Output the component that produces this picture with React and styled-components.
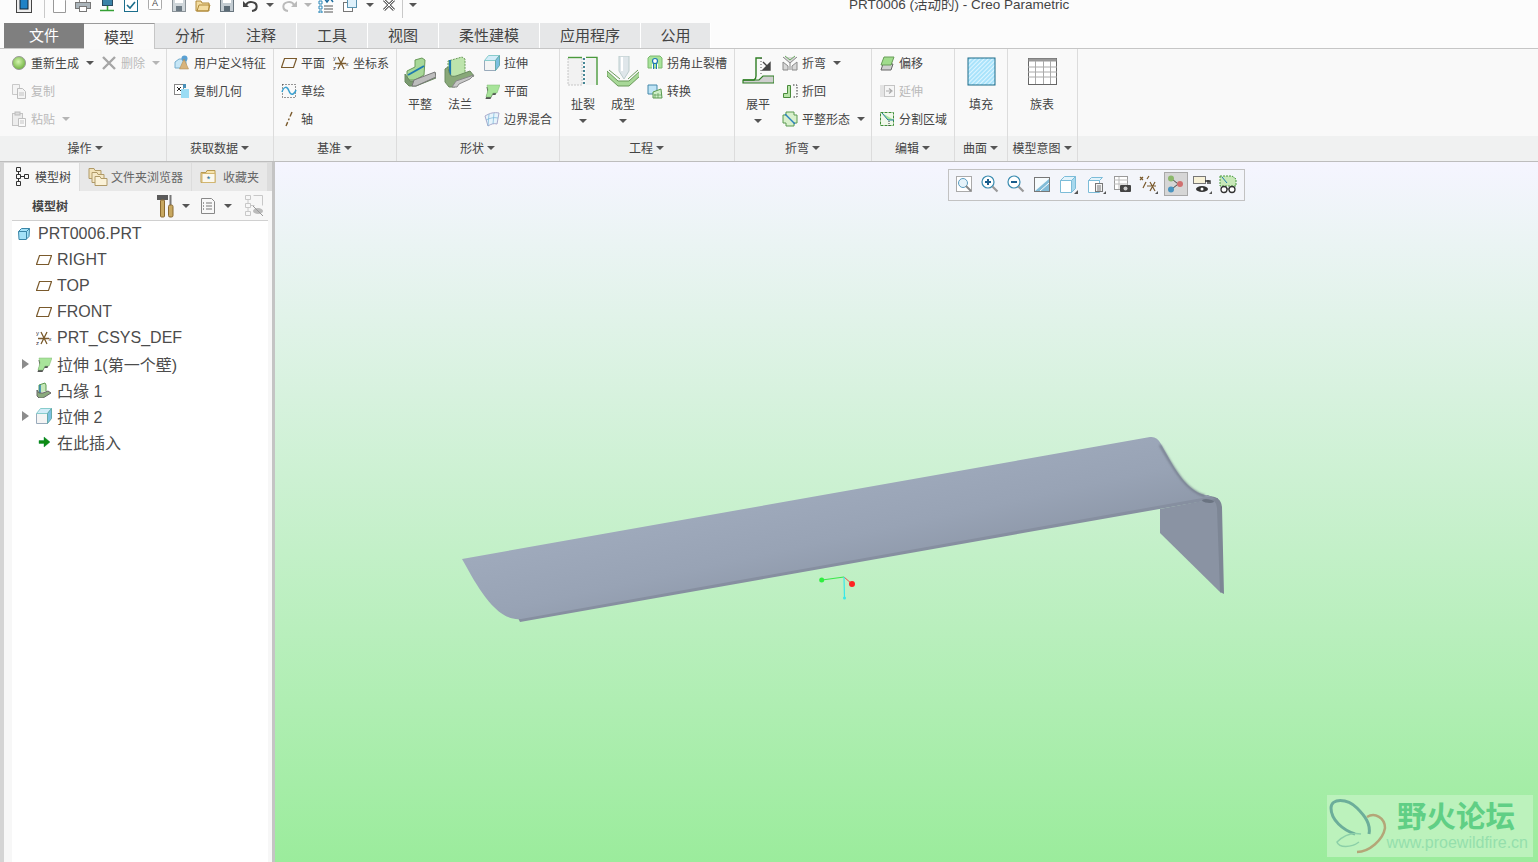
import React from "react";
import styled, { createGlobalStyle } from "styled-components";

const GlobalStyle = createGlobalStyle`
  html, body { margin: 0; padding: 0; background: #fafafa; }
  body { font-family: "Noto Sans CJK SC", "Liberation Sans", sans-serif; color: #444; overflow: hidden; }
`;

const Screen = styled.div`
  width: 1538px;
  height: 862px;
  overflow: hidden;
  display: flex;
  flex-direction: column;
  background: #fafafa;
`;

/* ---------- title bar ---------- */
const TitleBar = styled.div`
  height: 23px;
  flex: none;
  display: flex;
  align-items: flex-start;
  padding-left: 4px;
  background: #fcfcfc;
  overflow: hidden;
`;
const QuickRow = styled.div`
  display: flex;
  align-items: center;
  margin-top: -4px;
  height: 18px;
`;
const QuickSlot = styled.span`
  display: flex;
  flex: none;
  margin-left: ${(p) => p.$ml}px;
`;
const QuickSep = styled.span`
  width: 1px;
  height: 26px;
  flex: none;
  margin-left: ${(p) => p.$ml}px;
  background: #c9c9c9;
`;
const Title = styled.span`
  margin-left: 432px;
  font-family: "Liberation Sans", "Noto Sans CJK SC", sans-serif;
  font-size: 13.5px;
  line-height: 18px;
  color: #444;
  white-space: nowrap;
`;

/* ---------- tabs ---------- */
const TabRow = styled.div`
  height: 26px;
  flex: none;
  display: flex;
  padding-left: 4px;
  background: linear-gradient(#fcfcfc 25px, #c6c6c6 25px);
`;
const Tab = styled.div`
  width: ${(p) => p.$w}px;
  height: ${(p) => (p.$active ? 26 : 25)}px;
  box-sizing: border-box;
  display: flex;
  align-items: center;
  justify-content: center;
  padding-bottom: ${(p) => (p.$active ? 1 : 2)}px;
  font-size: 15px;
  color: ${(p) => (p.$file ? "#fff" : "#444")};
  background: ${(p) => (p.$file ? "#7f7f7f" : p.$active ? "#fafafa" : "#e6e7e8")};
  border-right: ${(p) => (p.$file ? "none" : `1px solid ${p.$active ? "#c6c6c6" : "#fff"}`)};
  border-top: ${(p) => (p.$active ? "1px solid #9a9a9a" : "none")};
`;

/* ---------- ribbon ---------- */
const Ribbon = styled.div`
  height: 113px;
  flex: none;
  box-sizing: border-box;
  display: flex;
  padding-left: 4px;
  background: linear-gradient(#f9f9f9 87px, #f0f1f1 87px);
  border-bottom: 1px solid #bdbdbd;
`;
const Group = styled.div`
  width: ${(p) => p.$w}px;
  box-sizing: border-box;
  display: flex;
  flex-direction: column;
  box-shadow: 1px 0 0 #dcdcdc;
`;
const GroupBody = styled.div`
  height: 87px;
  flex: none;
  display: flex;
  gap: 8px;
  padding-left: ${(p) => p.$pad}px;
`;
const GroupFooter = styled.div`
  flex: 1;
  display: flex;
  align-items: center;
  justify-content: center;
  gap: 3px;
  padding-bottom: 2px;
  font-size: 12px;
  color: #444;
`;
const Column = styled.div`
  display: flex;
  flex-direction: column;
`;
const SmallRow = styled.div`
  height: 28px;
  display: flex;
  align-items: center;
  gap: 7px;
`;
const SmallBtn = styled.div`
  display: flex;
  align-items: center;
  gap: 4px;
  font-size: 12px;
  line-height: 16px;
  white-space: nowrap;
  color: ${(p) => (p.$off ? "#b9b9b9" : "#444")};
`;
const BigBtn = styled.div`
  width: ${(p) => p.$w || 32}px;
  display: flex;
  flex-direction: column;
  align-items: center;
  padding-top: 7px;
  font-size: 12px;
  line-height: 16px;
  color: #444;
`;
const BigLabel = styled.span`
  margin-top: 8px;
  white-space: nowrap;
`;
const Caret = styled.span`
  width: 0;
  height: 0;
  flex: none;
  margin-left: ${(p) => p.$ml || 0}px;
  margin-top: ${(p) => p.$mt || 0}px;
  border-left: 4px solid transparent;
  border-right: 4px solid transparent;
  border-top: 4px solid ${(p) => (p.$off ? "#b5b5b5" : "#555")};
`;
const SvgIcon = styled.svg`
  flex: none;
  display: block;
`;

/* ---------- main area ---------- */
const Main = styled.div`
  flex: 1;
  min-height: 0;
  display: flex;
  padding-left: 4px;
  background: #d4d4d4;
`;
const LeftPanel = styled.div`
  width: 268px;
  flex: none;
  display: flex;
  flex-direction: column;
  background: #f7f7f7;
  border-right: 3px solid #c4c4c4;
`;
const PanelTabs = styled.div`
  height: 29px;
  flex: none;
  box-sizing: border-box;
  display: flex;
  gap: 1px;
  padding-top: 1px;
  background: #dcdcdc;
`;
const PanelTab = styled.div`
  width: ${(p) => p.$w}px;
  display: flex;
  align-items: center;
  gap: ${(p) => p.$gap}px;
  padding-left: ${(p) => p.$pad}px;
  padding-bottom: 1px;
  box-sizing: border-box;
  font-size: 12px;
  color: ${(p) => (p.$active ? "#444" : "#666")};
  background: ${(p) => (p.$active ? "#f7f7f7" : "#e8e8e8")};
`;
const PanelTools = styled.div`
  height: 30px;
  flex: none;
  box-sizing: border-box;
  margin: 0 4px 0 8px;
  padding-left: 20px;
  display: flex;
  align-items: center;
  border-bottom: 1px solid #d0d0d0;
`;
const PanelToolsTitle = styled.span`
  width: 124px;
  font-size: 12px;
  font-weight: 700;
  color: #444;
`;
const ToolSlot = styled.span`
  display: flex;
  flex: none;
  margin-left: ${(p) => p.$ml}px;
`;
const Tree = styled.div`
  flex: 1;
  margin: 0 4px 0 8px;
  background: #fff;
`;
const TreeRow = styled.div`
  height: 26px;
  display: flex;
  align-items: center;
  gap: 5px;
  padding-left: ${(p) => (p.$root ? 5 : 0)}px;
  font-family: "Liberation Sans", "Noto Sans CJK SC", sans-serif;
  font-size: 16px;
  color: #4c4c4c;
  white-space: nowrap;
`;
const Expander = styled.span`
  width: 24px;
  flex: none;
  margin-right: -5px;
  display: flex;
  justify-content: flex-end;
  padding-right: 7px;
  box-sizing: border-box;
`;
const ExpanderArrow = styled.span`
  width: 0;
  height: 0;
  border-top: 5px solid transparent;
  border-bottom: 5px solid transparent;
  border-left: 7px solid #8c8c8c;
`;
const Viewport = styled.div`
  flex: 1;
  position: relative;
  overflow: hidden;
  background: linear-gradient(#f5f5ff 0%, #9bec9c 100%);
`;
const PartDrawing = styled.svg`
  position: absolute;
  inset: 0;
`;
const ViewTools = styled.div`
  position: absolute;
  left: 673px;
  top: 7px;
  width: 297px;
  height: 32px;
  box-sizing: border-box;
  display: flex;
  align-items: center;
  padding: 0 0 2px 2px;
  background: #f3f5fa;
  border: 1px solid #c2c2c2;
`;
const ViewBtn = styled.div`
  width: 24px;
  height: 24px;
  flex: none;
  box-sizing: border-box;
  margin: 0 1px 0 ${(p) => p.$ml || 1}px;
  display: flex;
  align-items: center;
  justify-content: center;
  background: ${(p) => (p.$on ? "#d6d6d6" : "transparent")};
  border: 1px solid ${(p) => (p.$on ? "#a8a8a8" : "transparent")};
`;
const Watermark = styled.div`
  position: absolute;
  right: 5px;
  bottom: 5px;
  width: 206px;
  height: 62px;
  display: flex;
  flex-direction: column;
  align-items: flex-end;
  background: #bcf2bc;
`;
const WatermarkLogo = styled.svg`
  position: absolute;
  left: 2px;
  top: 3px;
`;
const WatermarkTitle = styled.div`
  margin: 0 18px 0 0;
  font-size: 29.5px;
  line-height: 38px;
  font-weight: 700;
  color: #60cf85;
  white-space: nowrap;
`;
const WatermarkUrl = styled.div`
  margin-right: 5px;
  font-family: "Liberation Sans", sans-serif;
  font-size: 16px;
  line-height: 20px;
  color: #95dfac;
  white-space: nowrap;
`;

/* ---------- icons ---------- */
const brown = "#7a5a2c";
const glyphs = {
  // quick access
  logo: <><rect x=".5" y=".5" width="15" height="15" fill="#eee" stroke="#444" /><rect x="4" y="2" width="8" height="10" fill="#1f82c6" stroke="#123" /></>,
  newDoc: <path d="M1.500 .5h9l3 3v12h-12z" fill="#fff" stroke="#999" />,
  print: <><rect x="4.5" y=".5" width="7" height="5" fill="#fff" stroke="#888" /><rect x=".5" y="5.5" width="15" height="6" fill="#aab4ba" stroke="#777" /><rect x="4.5" y="9.5" width="7" height="5" fill="#fff" stroke="#777" /></>,
  net: <><rect x="3.5" y=".5" width="10" height="8" fill="#3b83a8" stroke="#2a4a60" /><path d="M8.5 9v4M1 13.5h14" stroke="#35a035" strokeWidth="1.5" /></>,
  check: <><rect x="1.5" y="2.5" width="13" height="12" fill="#fff" stroke="#1b6e8c" /><path d="M4 8l3 3 5-6" fill="none" stroke="#1b6e8c" strokeWidth="1.6" /></>,
  letterA: <><rect x="1.5" y=".5" width="13" height="12" rx="1" fill="#fff" stroke="#aaa" /><text x="8" y="9" fontSize="9" textAnchor="middle" fill="#444" fontFamily="Liberation Sans">A</text></>,
  saveAll: <><rect x="1.5" y=".5" width="13" height="14" fill="#cfd6da" stroke="#8a9298" /><rect x="4" y="1" width="8" height="5" fill="#fff" /><rect x="5" y="9" width="6" height="5" fill="#6c7a84" /></>,
  open: <path d="M1 4h5l1 2h7v8H1zM2 14l2-6h11l-2 6z" fill="#f3dca0" stroke="#b08a3a" />,
  save: <><rect x="1.5" y=".5" width="13" height="14" fill="#c3ccd2" stroke="#68757e" /><rect x="4" y="1" width="8" height="5" fill="#fff" /><rect x="5" y="9" width="6" height="5" fill="#5b6b76" /></>,
  undo: <><path d="M3 8a5.5 4.5 0 1 1 6 6" fill="none" stroke="#444" strokeWidth="2" /><path d="M0 4l6 6H0z" fill="#444" /></>,
  redo: <><path d="M13 8a5.5 4.5 0 1 0-6 6" fill="none" stroke="#bbb" strokeWidth="2" /><path d="M16 4l-6 6h6z" fill="#bbb" /></>,
  layers: <><path d="M1 4h3v3H1zM1 9h3v3H1zM1 14h3v2H1z" fill="#fff" stroke="#2a86b8" /><path d="M6 9h9M6 12h9M6 15h9" stroke="#555" /><path d="M6 1l3 4 3-4 3 4" fill="none" stroke="#1a6a9c" strokeWidth="1.5" /></>,
  windows: <><rect x="1.5" y="5.5" width="9" height="9" fill="#fff" stroke="#777" /><rect x="5.5" y="1.5" width="9" height="9" fill="#dff1fb" stroke="#5a93b0" /></>,
  closeBox: <><path d="M3 3l10 10M13 3L3 13" stroke="#666" strokeWidth="3" /><path d="M3 3l10 10M13 3L3 13" stroke="#fff" strokeWidth="1" /></>,
  // ribbon small
  regen: <><defs><radialGradient id="rg" cx=".45" cy=".4" r=".6"><stop offset="0" stopColor="#d5f5b0" /><stop offset="1" stopColor="#6fb23f" /></radialGradient></defs><circle cx="8" cy="8" r="6.5" fill="url(#rg)" stroke="#9a9a9a" /></>,
  del: <path d="M2 2l12 12M14 2L2 14" stroke="#a6a6a6" strokeWidth="2.4" />,
  copy: <><path d="M1.5 1.5h7v10h-7z" fill="#f4f4f4" stroke="#c9c9c9" /><path d="M6.5 5.5h5l3 3v7h-8z" fill="#f4f4f4" stroke="#bdbdbd" /><path d="M8 10h5M8 12h5" stroke="#c2c2c2" /></>,
  paste: <><rect x="1.5" y="2.5" width="10" height="12" fill="#ededed" stroke="#c4c4c4" /><rect x="4" y="1" width="5" height="3" fill="#ddd" stroke="#bbb" /><path d="M7.5 7.5h7v8h-7z" fill="#fafafa" stroke="#c0c0c0" /><path d="M9 10h4M9 12h4" stroke="#c4c4c4" /></>,
  udf: <><path d="M1 7l4-3h7v6l-3 3H1z" fill="#c6e6f6" stroke="#76aece" /><circle cx="10.5" cy="3.5" r="3" fill="#5aa0d2" /><path d="M10 4l4.5 10h-9z" fill="#d8b47c" stroke="#a8844c" strokeWidth=".5" /></>,
  copyGeo: <><rect x=".5" y="1.5" width="9" height="10" fill="#fff" stroke="#888" /><path d="M3 4l4 4M7 4l-4 4" stroke="#222" /><rect x="7" y="6" width="8" height="9" fill="#9adcf4" /><rect x="9" y="1" width="3" height="4" fill="#4a90b8" /></>,
  plane: <path d="M.5 12.500L3.500 3.500h12l-3 9z" fill="none" stroke={brown} strokeWidth="1.2" />,
  csys: <><path d="M5 2l6 12M11 2L5 14M2 8.500h11" fill="none" stroke={brown} strokeWidth="1.300" /><text x="0" y="5" fontSize="6" fill="#333" fontFamily="Liberation Sans">y</text><text x="0" y="15" fontSize="6" fill="#333" fontFamily="Liberation Sans">z</text><text x="12.500" y="11" fontSize="6" fill="#333" fontFamily="Liberation Sans">x</text></>,
  sketch: <><rect x="1.5" y="1.5" width="13" height="13" fill="none" stroke="#333" strokeDasharray="1 2" /><path d="M1 9c2-6 5-6 7-1s5 4 7-1" fill="none" stroke="#38a0d0" strokeWidth="1.5" /></>,
  axis: <path d="M11 1L5 15" stroke={brown} strokeWidth="1.4" strokeDasharray="5 2 2 2" />,
  extrude: <><path d="M.5 5.500h11v10h-11z" fill="#f4f4f4" stroke="#9ab" /><path d="M.5 5.500l4-5h11l-4 5z" fill="#d2ecf8" stroke="#8cc" /><path d="M11.500 5.500l4-5v10l-4 5z" fill="#7cc0e0" stroke="#6aa" /></>,
  flatWall: <><path d="M3 3h12l-3 8H9l-2 4H2l2-7z" fill="#555" transform="translate(-.5 1)" /><path d="M3 2h13l-3 8H9l-2 4H2l2-7z" fill="#a8e49a" stroke="#7cb870" strokeWidth=".5" /></>,
  blend: <><path d="M1 5c5-3 9-4 14-3l-2 11c-3-1-6 0-9 2z" fill="#e6f4fb" stroke="#aac" /><path d="M5 3l-1 12M10 2l-1 11M2 9c4-2 8-3 12-2" stroke="#78b4d8" fill="none" strokeWidth=".7" /></>,
  corner: <><path d="M1 3l2-2h10l2 2v10H1z" fill="#a8e49a" stroke="#7cb870" /><path d="M6 14V9M10 14V9" stroke="#fff" strokeWidth="2" /><circle cx="8" cy="6" r="2.5" fill="#fff" stroke="#1e78b4" strokeWidth="1.2" /><path d="M6.5 8v6M9.5 8v6" stroke="#1e78b4" /></>,
  convert: <><path d="M1 2h9v9H1z" fill="#bfe4f6" stroke="#48a" /><path d="M6 9l8-3 1 9H6z" fill="#cfeec8" stroke="#5a9a50" /><path d="M8 11v4M11 10v5M7 12h8" stroke="#5a9a50" strokeWidth=".7" /></>,
  bend: <><path d="M1 2l7 6 7-6M8 8v7M1 7l5 4v4H1zM15 7l-5 4v4h5z" fill="#d8d8d8" stroke="#8a8a8a" /><path d="M3 1l5 4 5-4" fill="none" stroke="#68a860" /></>,
  bendBack: <><path d="M1.5 14.5v-4h4v-8h3v12z" fill="#b8e4a8" stroke="#4a8a3c" /><path d="M11 2h4v12h-5" fill="none" stroke="#333" strokeDasharray="1.5 1.5" /></>,
  flatState: <><path d="M4 1h8v3h3v8h-3v3H4v-3H1V4h3z" fill="#d8f0cc" stroke="#5a9a50" /><path d="M3 3l10 10" stroke="#2a80c0" strokeWidth="1.4" /></>,
  offset: <><path d="M4 9L2 15h10l2-6z" fill="#d0d0d0" stroke="#666" /><path d="M5 2h10l-3 8H2z" fill="#a0dc8c" stroke="#689c58" /></>,
  extend: <><rect x="1" y="2" width="5" height="12" fill="#e4e4e4" /><rect x="5.5" y="2.5" width="10" height="11" fill="#f6f6f6" stroke="#c4c4c4" /><path d="M7 8h5M10 5.5L13 8l-3 2.5" fill="none" stroke="#aaa" strokeWidth="1.2" /></>,
  split: <><rect x="1.5" y="1.5" width="13" height="13" fill="#f0f8ea" stroke="#3e8e36" strokeDasharray="3 1" /><path d="M3 2l6 7h6" fill="#a8e49a" stroke="#1e7a9c" /><path d="M10 10v5" stroke="#333" strokeDasharray="1 1" /></>,
  // big buttons
  flat: <><path d="M3 24V15l8-4V4l7-2 3 2-1 15-9 5z" fill="#a8d898" stroke="#6a9a5a" /><path d="M4 19l16-9" stroke="#1e7ab0" strokeWidth="2" /><path d="M1 18v8l4 4h7l20-8v-5l-21 8H6z" fill="#7a9a70" stroke="#6a8a60" /><path d="M10 24l21-8 1 5-20 9h-4z" fill="#bdbdbd" stroke="#777" /></>,
  flange: <><path d="M4 24V5L18 1l3 2v15l-8 3-4 4z" fill="#bde4ac" stroke="#6a9a5a" strokeDasharray="2 1" /><path d="M6 4v19" stroke="#1e7ab0" strokeWidth="2.2" /><path d="M1 13v13l4 5h6l3-5 16-6-4-5-14 5c-5 1-7 0-8-9z" fill="#88a878" stroke="#6a8a60" /><path d="M12 25l18-6-4 4-11 5-2 3H8z" fill="#c8c8c8" stroke="#888" /></>,
  rip: <><path d="M1 1.5h14V29H1z" fill="#f2f2f2" stroke="#999" strokeDasharray="1 2" /><path d="M1 1.5h14" stroke="#4a9a3c" strokeWidth="1.4" /><path d="M19 1.5h11V29" fill="none" stroke="#4a9a3c" strokeWidth="1.4" /><path d="M19 2h10v27H19z" fill="#f2f2f2" /><path d="M17 2v27" stroke="#1a6a7c" strokeWidth="1.6" strokeDasharray="2 2" /></>,
  form: <><path d="M12 0h10v15l-5 8-5-8z" fill="#dfe6ea" stroke="#bcc" /><path d="M15 1v14" stroke="#fff" strokeWidth="2" /><path d="M0 15l11 10h11l11-10v5L22 30H11L0 20z" fill="#a8d898" stroke="#6a9a5a" /><path d="M2 14l11 9M31 14l-10 9" stroke="#6a9a5a" /></>,
  unfold: <><path d="M1 24h16l4-4h11v7H1z" fill="#cfcfcf" stroke="#2f7f24" strokeWidth="1.2" /><path d="M1 24h11c2-1 2-2 2-4V2h6" fill="none" stroke="#2f7f24" strokeWidth="1.4" /><path d="M19 2v16" stroke="#555" strokeDasharray="1 2" /><path d="M21 6l7 7M28 7v7h-7z" fill="#444" stroke="#444" strokeWidth="1.4" /></>,
  fill: <><defs><pattern id="hatch" width="3" height="3" patternUnits="userSpaceOnUse" patternTransform="rotate(-45)"><rect width="3" height="3" fill="#a9e3fb" /><rect width="3" height="1" fill="#dff5ff" /></pattern></defs><rect x="3" y="2" width="27" height="27" fill="url(#hatch)" stroke="#1a6a88" strokeWidth="1" /></>,
  table: <><rect x="2.5" y="2.5" width="28" height="26" fill="#fff" stroke="#666" /><rect x="2.5" y="2.5" width="28" height="3" fill="#999" /><path d="M2 11h29M2 16h29M2 21h29M9.500 5v23M17.500 5v23M24.500 5v23" stroke="#aaa" /></>,
  // left panel
  treeTab: <><path d="M1.500 .500h4v4h-4zM1.500 7.500h4v4h-4zM1.500 14.500h4v4h-4zM9.500 7.500h4v4h-4z" fill="none" stroke="#333" /><path d="M3.500 4.500v3M3.500 11.500v3M5.500 9.500h4" stroke="#333" /></>,
  folders: <><path d="M1 1.500h5l1 2h6v8H1z" fill="#f2e2b8" stroke="#b09a68" /><path d="M4 5.500h5l1 2h6v8H4z" fill="#f5e8c6" stroke="#b09a68" /><path d="M7 9.500h5l1 2h6v7H7z" fill="#fbf2d8" stroke="#b09a68" /></>,
  starFolder: <><path d="M1 3.500h5l1-2h8v12H1z" fill="#f6e3ac" stroke="#b89a50" /><rect x="2" y="4.500" width="13" height="9" fill="#fbf8ee" stroke="#d2b670" /><text x="8.500" y="12.500" textAnchor="middle" fontSize="9" fill="#156a96" fontFamily="Liberation Sans">*</text></>,
  hammer: <><rect x="1" y="1" width="11" height="5" fill="#5a5a5a" /><rect x="4.500" y="6" width="4" height="17" rx="1" fill="#c8a860" stroke="#8a6a30" /><rect x="13.500" y="1" width="2" height="10" fill="#777" /><rect x="12.500" y="11" width="4.500" height="12" rx="1.500" fill="#c8a860" stroke="#8a6a30" /></>,
  listDoc: <><path d="M1.500 .500h10l3 3v12h-13z" fill="#f8f8f8" stroke="#888" /><path d="M3 5h1M3 8h1M3 11h1" stroke="#444" /><path d="M6 5h6M6 8h6M6 11h6" stroke="#777" /></>,
  hiddenTree: <><path d="M1.500 1.500h5v4h-5zM1.500 9.500h5v4h-5zM1.500 17.500h5v4h-5zM9.500 1.500h9v10" fill="none" stroke="#c8c8c8" /><path d="M4 5.500v4M4 13.500v4M6.500 11.500h4" stroke="#c8c8c8" /><ellipse cx="14" cy="17" rx="5" ry="3" fill="#bbb" /><path d="M9 12l10 10" stroke="#999" /></>,
  // tree
  cube: <><path d="M1.500 5.500l3-3h8l-.5 8-3 3h-7z" fill="#a4e2f8" stroke="#3a86a8" /><path d="M1.500 5.500h8v8M9.500 5.500l3-3" fill="none" stroke="#3a86a8" /></>,
  treeFlange: <><path d="M3 11V3l6-2 1 2v6" fill="#c6e8b8" stroke="#5a9a50" /><path d="M4 3v8" stroke="#1e7ab0" strokeWidth="1.4" /><path d="M1 8v6l2 2h4l8-5-3-2-5 2H3z" fill="#8aaa7c" stroke="#666" /></>,
  arrow: <path d="M3 6.500h5V3l6 5-6 5V9.500H3z" fill="#0d8a12" stroke="#083" strokeWidth=".4" />,
  // view toolbar
  refit: <><rect x="2.500" y="2.500" width="15" height="15" fill="#fff" stroke="#aaa" /><circle cx="9" cy="9" r="4.500" fill="#e6f3fa" stroke="#5a9cc0" /><path d="M12 12l5 5" stroke="#888" strokeWidth="2" /></>,
  zoomIn: <><circle cx="8" cy="8" r="6" fill="#fff" stroke="#3a8cb0" strokeWidth="1.2" /><path d="M5 8h6M8 5v6" stroke="#1a5d8c" strokeWidth="2" /><path d="M12.500 12.500l5 5" stroke="#999" strokeWidth="2.200" /></>,
  zoomOut: <><circle cx="8" cy="8" r="6" fill="#fff" stroke="#3a8cb0" strokeWidth="1.2" /><path d="M5 8h6" stroke="#1a5d8c" strokeWidth="2" /><path d="M12.500 12.500l5 5" stroke="#999" strokeWidth="2.200" /></>,
  repaint: <><rect x="2.500" y="3.500" width="15" height="14" fill="#f6fbfd" stroke="#777" /><path d="M3 17L17 5v12z" fill="#82bcd8" /><path d="M8 17l9-8" stroke="#fff" /></>,
  viewCube: <><path d="M2.500 6.500h11v12h-11z" fill="#fff" stroke="#7cbcd8" /><path d="M2.500 6.500l4-4h11l-4 4z" fill="#e2f3fb" stroke="#7cbcd8" /><path d="M13.500 6.500l4-4v12l-4 4z" fill="#a6d8ee" stroke="#7cbcd8" /><path d="M20 20h-4l4-4z" fill="#555" /></>,
  viewList: <><path d="M2.500 6.500h11v12h-11z" fill="#fff" stroke="#7cbcd8" /><path d="M2.500 6.500l3-3h11l-3 3z" fill="#e2f3fb" stroke="#7cbcd8" /><rect x="9.500" y="9.500" width="7" height="8" fill="#f4f4f4" stroke="#777" /><path d="M11 12h4M11 14h4M11 16h4" stroke="#777" /><path d="M20 20h-3l3-3z" fill="#555" /></>,
  viewCam: <><rect x="2.500" y="2.500" width="13" height="13" fill="#fff" stroke="#999" /><path d="M2 6h14M2 10h14M7 3v12" stroke="#bbb" /><rect x="8" y="11" width="11" height="7" rx="1" fill="#444" /><circle cx="13.500" cy="14.500" r="2" fill="#ccc" /></>,
  viewDatum: <><path d="M2 3l3 3M5 3L2 6M9 5l2-3M5 14l3-6M12 8l5 9M17 8l-5 9M9 12h9" stroke={brown} strokeWidth="1.200" /><path d="M20 20h-3l3-3z" fill="#555" /></>,
  viewNodes: <><path d="M6 5l6 5-6 5" fill="none" stroke="#444" /><circle cx="5" cy="4.500" r="3" fill="#8cb86c" /><circle cx="5" cy="15.500" r="3" fill="#4a94c0" /><circle cx="14" cy="10" r="3" fill="#d07070" /></>,
  viewTag: <><rect x="1.500" y="2.500" width="12" height="7" fill="#f8f2d8" stroke="#777" /><path d="M16 6v4M13 7h5v3" fill="none" stroke="#333" strokeWidth="1.400" /><ellipse cx="10" cy="15" rx="6" ry="3" fill="#333" /><circle cx="10" cy="15" r="1.500" fill="#fff" /><path d="M20 20h-3l3-3z" fill="#555" /></>,
  viewGlasses: <><path d="M2 2h12l4 3v7H2z" fill="#c8e8b8" stroke="#4a9a40" strokeDasharray="2 1" /><path d="M4 3l5 6" stroke="#1e7ab0" /><circle cx="6" cy="15.500" r="3" fill="#fff" stroke="#333" strokeWidth="1.300" /><circle cx="14" cy="15.500" r="3" fill="#fff" stroke="#333" strokeWidth="1.300" /><path d="M9 15h2" stroke="#333" /></>,
};

function Icon({ name, size = 16, box, height }) {
  const view = box || size;
  return (
    <SvgIcon width={size} height={height || size} viewBox={`0 0 ${view} ${height || view}`}>
      {glyphs[name]}
    </SvgIcon>
  );
}

const tabs = [
  ["文件", 80, "file"],
  ["模型", 71, "active"],
  ["分析", 71],
  ["注释", 71],
  ["工具", 71],
  ["视图", 71],
  ["柔性建模", 101],
  ["应用程序", 101],
  ["公用", 70],
];

function Small({ icon, label, off, caret, caretGap = 7 }) {
  return (
    <SmallBtn $off={off}>
      <Icon name={icon} />
      <span>{label}</span>
      {caret && <Caret $ml={caretGap - 4} $off={off} />}
    </SmallBtn>
  );
}

function Big({ icon, label, caret, w }) {
  return (
    <BigBtn $w={w}>
      <Icon name={icon} size={32} />
      <BigLabel>{label}</BigLabel>
      {caret && <Caret $mt={7} />}
    </BigBtn>
  );
}

function Footer({ children }) {
  return (
    <GroupFooter>
      <span>{children}</span>
      <Caret />
    </GroupFooter>
  );
}

function QuickBar() {
  const items = [
    ["logo", 12], ["sep", 12], ["newDoc", 7], ["print", 7], ["net", 8], ["check", 8], ["letterA", 8],
    ["saveAll", 8], ["open", 8], ["save", 8], ["undo", 8], ["caret", 7], ["redo", 7], ["caretOff", 7],
    ["layers", 6], ["windows", 8], ["caret", 8], ["closeBox", 7], ["sep", 5], ["caret", 6],
  ];
  return (
    <QuickRow>
      {items.map(([name, ml], i) => {
        if (name === "sep") return <QuickSep key={i} $ml={ml} />;
        if (name === "caret") return <QuickSlot key={i} $ml={ml}><Caret /></QuickSlot>;
        if (name === "caretOff") return <QuickSlot key={i} $ml={ml}><Caret $off /></QuickSlot>;
        return <QuickSlot key={i} $ml={ml}><Icon name={name} /></QuickSlot>;
      })}
      <Title>PRT0006 (活动的) - Creo Parametric</Title>
    </QuickRow>
  );
}

function RibbonBar() {
  return (
    <Ribbon>
      <Group $w={162}>
        <GroupBody $pad={7}>
          <Column>
            <SmallRow>
              <Small icon="regen" label="重新生成" caret />
              <Small icon="del" label="删除" off caret />
            </SmallRow>
            <SmallRow><Small icon="copy" label="复制" off /></SmallRow>
            <SmallRow><Small icon="paste" label="粘贴" off caret /></SmallRow>
          </Column>
        </GroupBody>
        <Footer>操作</Footer>
      </Group>
      <Group $w={107}>
        <GroupBody $pad={8}>
          <Column>
            <SmallRow><Small icon="udf" label="用户定义特征" /></SmallRow>
            <SmallRow><Small icon="copyGeo" label="复制几何" /></SmallRow>
          </Column>
        </GroupBody>
        <Footer>获取数据</Footer>
      </Group>
      <Group $w={123}>
        <GroupBody $pad={8}>
          <Column>
            <SmallRow><Small icon="plane" label="平面" /></SmallRow>
            <SmallRow><Small icon="sketch" label="草绘" /></SmallRow>
            <SmallRow><Small icon="axis" label="轴" /></SmallRow>
          </Column>
          <Column>
            <SmallRow><Small icon="csys" label="坐标系" /></SmallRow>
          </Column>
        </GroupBody>
        <Footer>基准</Footer>
      </Group>
      <Group $w={163}>
        <GroupBody $pad={8}>
          <Big icon="flat" label="平整" />
          <Big icon="flange" label="法兰" />
          <Column>
            <SmallRow><Small icon="extrude" label="拉伸" /></SmallRow>
            <SmallRow><Small icon="flatWall" label="平面" /></SmallRow>
            <SmallRow><Small icon="blend" label="边界混合" /></SmallRow>
          </Column>
        </GroupBody>
        <Footer>形状</Footer>
      </Group>
      <Group $w={175}>
        <GroupBody $pad={8}>
          <Big icon="rip" label="扯裂" caret />
          <Big icon="form" label="成型" caret />
          <Column>
            <SmallRow><Small icon="corner" label="拐角止裂槽" /></SmallRow>
            <SmallRow><Small icon="convert" label="转换" /></SmallRow>
          </Column>
        </GroupBody>
        <Footer>工程</Footer>
      </Group>
      <Group $w={137}>
        <GroupBody $pad={8}>
          <Big icon="unfold" label="展平" caret />
          <Column>
            <SmallRow><Small icon="bend" label="折弯" caret /></SmallRow>
            <SmallRow><Small icon="bendBack" label="折回" /></SmallRow>
            <SmallRow><Small icon="flatState" label="平整形态" caret /></SmallRow>
          </Column>
        </GroupBody>
        <Footer>折弯</Footer>
      </Group>
      <Group $w={83}>
        <GroupBody $pad={8}>
          <Column>
            <SmallRow><Small icon="offset" label="偏移" /></SmallRow>
            <SmallRow><Small icon="extend" label="延伸" off /></SmallRow>
            <SmallRow><Small icon="split" label="分割区域" /></SmallRow>
          </Column>
        </GroupBody>
        <Footer>编辑</Footer>
      </Group>
      <Group $w={53}>
        <GroupBody $pad={11}><Big icon="fill" label="填充" /></GroupBody>
        <Footer>曲面</Footer>
      </Group>
      <Group $w={70}>
        <GroupBody $pad={19}><Big icon="table" label="族表" /></GroupBody>
        <Footer>模型意图</Footer>
      </Group>
    </Ribbon>
  );
}

function ModelTree() {
  return (
    <LeftPanel>
      <PanelTabs>
        <PanelTab $w={75} $pad={11} $gap={6} $active><Icon name="treeTab" size={14} height={20} box={14} />模型树</PanelTab>
        <PanelTab $w={111} $pad={8} $gap={3}><Icon name="folders" size={20} />文件夹浏览器</PanelTab>
        <PanelTab $w={75} $pad={8} $gap={7}><Icon name="starFolder" />收藏夹</PanelTab>
      </PanelTabs>
      <PanelTools>
        <PanelToolsTitle>模型树</PanelToolsTitle>
        <Icon name="hammer" size={18} height={24} box={18} />
        <Caret $ml={8} />
        <ToolSlot $ml={10}><Icon name="listDoc" /></ToolSlot>
        <Caret $ml={8} />
        <ToolSlot $ml={12}><Icon name="hiddenTree" size={20} height={24} box={20} /></ToolSlot>
      </PanelTools>
      <Tree>
        <TreeRow $root><Icon name="cube" />PRT0006.PRT</TreeRow>
        <TreeRow><Expander /><Icon name="plane" />RIGHT</TreeRow>
        <TreeRow><Expander /><Icon name="plane" />TOP</TreeRow>
        <TreeRow><Expander /><Icon name="plane" />FRONT</TreeRow>
        <TreeRow><Expander /><Icon name="csys" />PRT_CSYS_DEF</TreeRow>
        <TreeRow><Expander><ExpanderArrow /></Expander><Icon name="flatWall" />拉伸 1(第一个壁)</TreeRow>
        <TreeRow><Expander /><Icon name="treeFlange" />凸缘 1</TreeRow>
        <TreeRow><Expander><ExpanderArrow /></Expander><Icon name="extrude" />拉伸 2</TreeRow>
        <TreeRow><Expander /><Icon name="arrow" />在此插入</TreeRow>
      </Tree>
    </LeftPanel>
  );
}

function SheetPart() {
  return (
    <PartDrawing width="1263" height="700" viewBox="275 162 1263 700">
      <defs>
        <linearGradient id="face" gradientUnits="userSpaceOnUse" x1="700" y1="480" x2="730" y2="620">
          <stop offset="0" stopColor="#a2adbf" />
          <stop offset=".6" stopColor="#98a3b5" />
          <stop offset="1" stopColor="#8b95a6" />
        </linearGradient>
        <filter id="soft"><feGaussianBlur stdDeviation="1" /></filter>
      </defs>
      <path d="M1160 509L1218 498 1221 593 1160 533z" fill="#8a93a3" />
      <path d="M1208 496q13 0 14 11l2 87-4-2-3-84q0-8-9-9z" fill="#7d8695" />
      <path d="M518 618L1208 495 1216 499 520 622z" fill="#868fa0" />
      <path
        d="M462 559L1150 437Q1157 436 1161 444C1172 463 1184 490 1205 495L1212 497 1208 497 521 619C495 622 475 582 462 559z"
        fill="url(#face)"
      />
      <path d="M1160 445C1172 465 1184 490 1205 496" fill="none" stroke="#737c8b" strokeWidth="2" filter="url(#soft)" />
      <ellipse cx="1208" cy="501" rx="6" ry="1.800" fill="#6a7381" transform="rotate(8 1208 501)" />
      <path d="M844 577L822 580" stroke="#3ae84a" strokeWidth="1.200" fill="none" />
      <path d="M844 577L852 584" stroke="#e85050" strokeWidth="1" />
      <path d="M844 577L844.500 598" stroke="#38e8e8" strokeWidth="1.200" />
      <circle cx="821.700" cy="580" r="2.500" fill="#2fee3f" />
      <circle cx="852" cy="584" r="3" fill="#f22" />
      <circle cx="844.500" cy="598" r="1.500" fill="#38e8e8" />
    </PartDrawing>
  );
}

function ViewToolbar() {
  const names = ["refit", "zoomIn", "zoomOut", "repaint", "viewCube", "viewList", "viewCam", "viewDatum", "viewNodes", "viewTag", "viewGlasses"];
  return (
    <ViewTools>
      {names.map((name) => (
        <ViewBtn key={name} $on={name === "viewNodes"} $ml={name === "viewList" || name === "viewNodes" ? 3 : 1}>
          <Icon name={name} size={20} />
        </ViewBtn>
      ))}
    </ViewTools>
  );
}

export default function App() {
  return (
    <Screen>
      <GlobalStyle />
      <TitleBar><QuickBar /></TitleBar>
      <TabRow>
        {tabs.map(([label, w, kind]) => (
          <Tab key={label} $w={w} $file={kind === "file"} $active={kind === "active"}>{label}</Tab>
        ))}
      </TabRow>
      <RibbonBar />
      <Main>
        <ModelTree />
        <Viewport>
          <SheetPart />
          <ViewToolbar />
          <Watermark>
            <WatermarkLogo width="60" height="56" viewBox="0 0 60 56">
              <path d="M26 36C14 32 2 22 2 10C2 0 18 0 28 10C36 18 42 26 40 36" fill="none" stroke="#6cae9a" strokeWidth="3" />
              <path d="M38 19C46 14 56 20 56 30C54 42 40 54 28 54" fill="none" stroke="#b4a678" strokeWidth="2.500" />
              <path d="M32 36C22 34 14 38 8 44C10 50 22 50 30 44" fill="none" stroke="#8cd0a8" strokeWidth="1.500" />
            </WatermarkLogo>
            <WatermarkTitle>野火论坛</WatermarkTitle>
            <WatermarkUrl>www.proewildfire.cn</WatermarkUrl>
          </Watermark>
        </Viewport>
      </Main>
    </Screen>
  );
}
